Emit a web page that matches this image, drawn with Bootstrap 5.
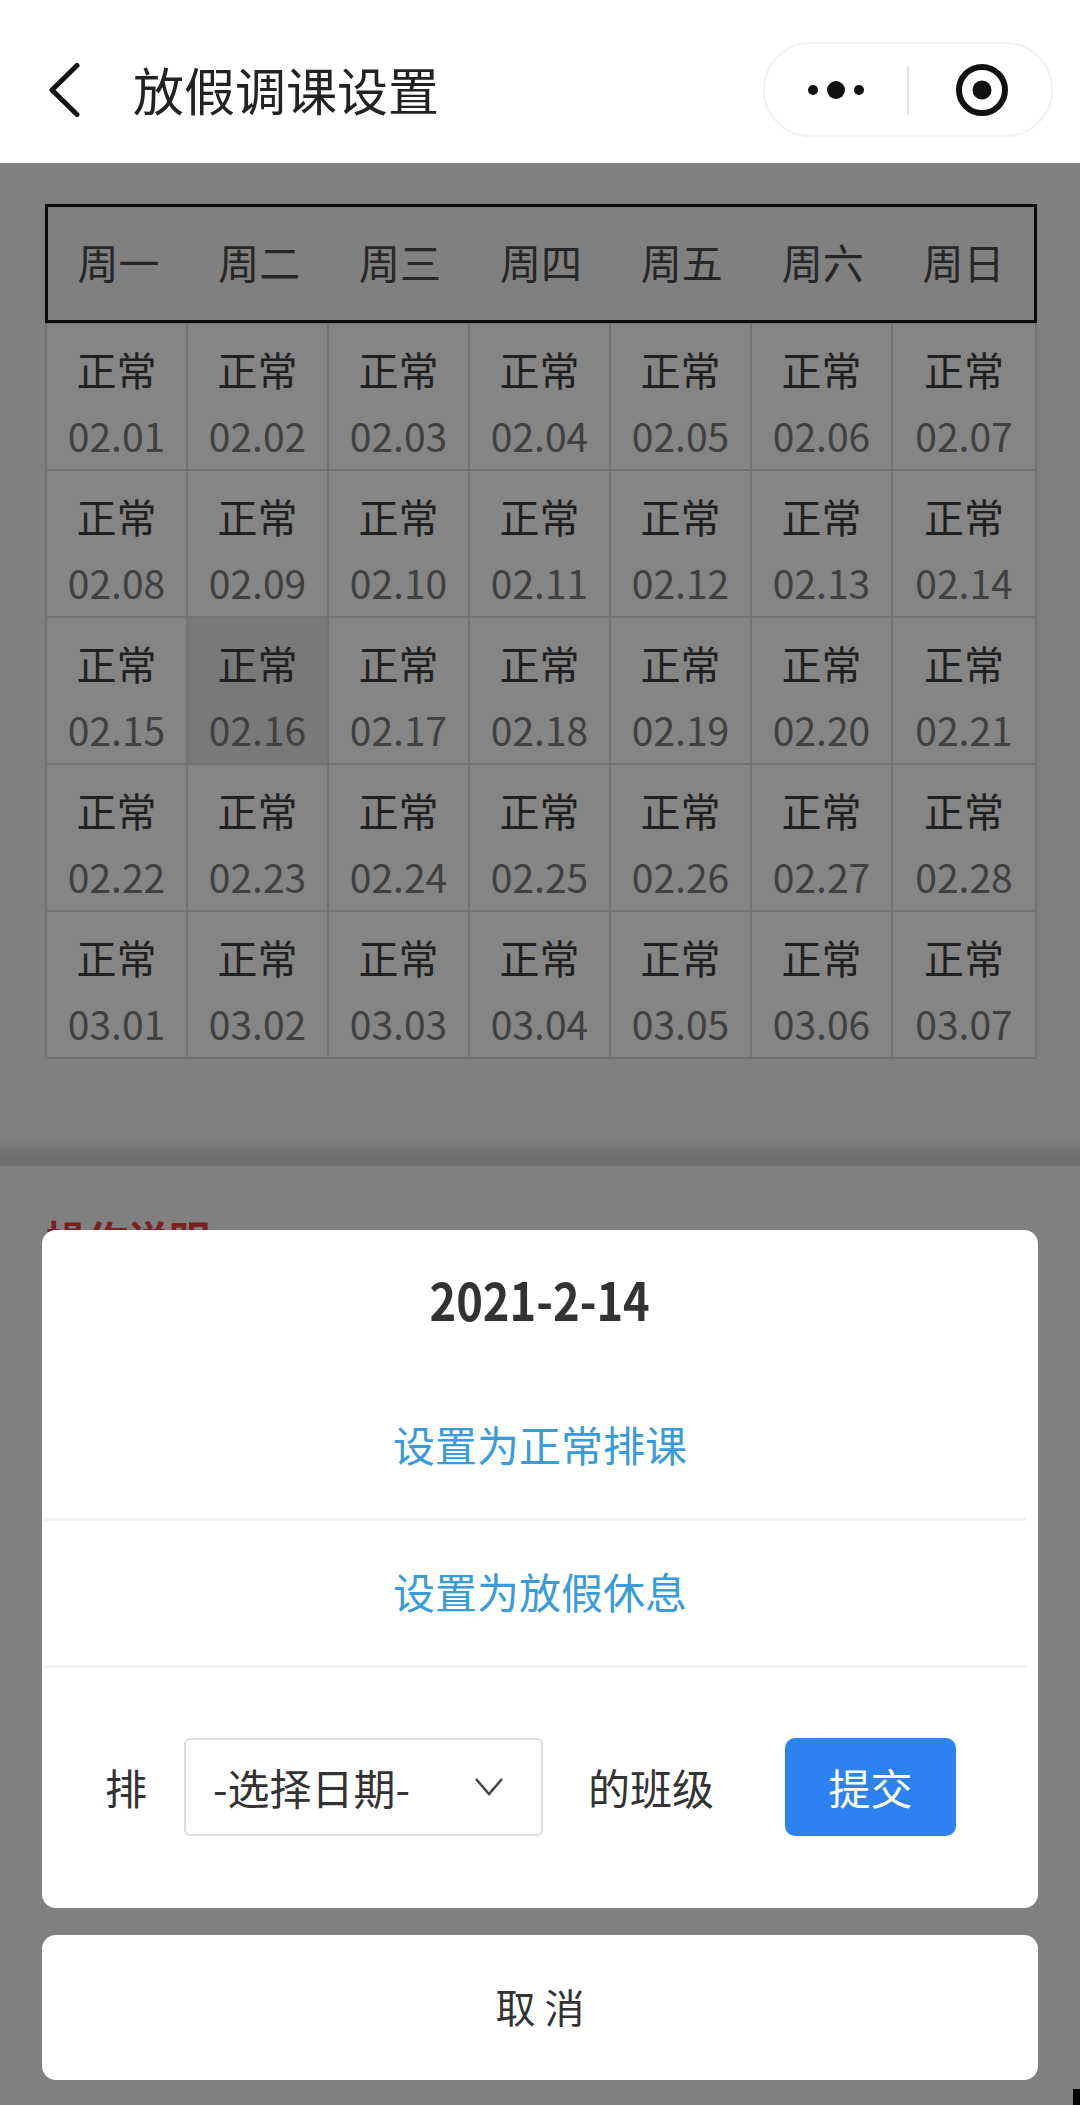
<!DOCTYPE html>
<html lang="zh-CN">
<head>
  <meta charset="UTF-8">
  <title>放假调课设置</title>
  <meta name="viewport" content="width=device-width, initial-scale=1">
  <link href="https://cdn.jsdelivr.net/npm/bootstrap@5.3.3/dist/css/bootstrap.min.css" rel="stylesheet">
  <style>
    html, body {
      height: 2105px;
      overflow: hidden;
    }

    body {
      background: #808080;
      font-family: "Noto Sans CJK SC", "Noto Sans", sans-serif;
      color: #1f1f1f;
    }

    .top-bar {
      height: 163px;
      background: #fff;
      padding: 16px 27px 0 48px;
    }

    .back-icon {
      width: 34px;
      height: 56px;
      margin-right: 51px;
    }

    .page-title {
      font-size: 51px;
      line-height: 1;
      color: #222;
      margin: 0;
    }

    .capsule {
      width: 290px;
      height: 95px;
      border: 2px solid #f1f1f1;
      border-radius: 48px;
    }

    .capsule-half {
      width: 50%;
    }

    .capsule-line {
      width: 2px;
      height: 48px;
      background: #e2e2e2;
    }

    .calendar {
      padding: 41px 43px 0 45px;
    }

    .week-head {
      height: 119px;
      border: 3px solid #0c0c0c;
      padding-bottom: 4px;
      font-size: 41px;
      color: #262626;
    }

    .week-head > div {
      width: 14.2857%;
      text-align: center;
    }

    .day-grid {
      display: grid;
      grid-template-columns: repeat(6, 141px) 1fr;
      border-left: 2px solid #737373;
      border-top: 1px solid #737373;
    }

    .day-cell {
      height: 147px;
      border-right: 2px solid #737373;
      border-bottom: 2px solid #737373;
      background: #858585;
      text-align: center;
      padding-top: 20px;
    }

    .day-cell.picked {
      background: #797979;
    }

    .day-state {
      font-size: 40px;
      line-height: 50px;
      color: #202020;
    }

    .day-date {
      font-size: 39px;
      line-height: 50px;
      margin-top: 16px;
      color: #404040;
    }

    .band {
      height: 26px;
      margin-top: 81px;
      background: linear-gradient(#7f7f7f, #6e6e6e 65%, #707070);
    }

    .notes-title {
      font-size: 41px;
      font-weight: 700;
      line-height: 1;
      color: #7a2020;
      padding: 52px 0 0 46px;
    }

    .sheet {
      position: absolute;
      left: 42px;
      right: 42px;
      top: 1230px;
    }

    .sheet-card {
      background: #fff;
      border-radius: 14px;
      overflow: hidden;
    }

    .sheet-title {
      height: 144px;
      padding-bottom: 6px;
      font-size: 52px;
      font-weight: 700;
      color: #333;
    }

    .sheet-title span {
      display: inline-block;
      transform: scaleX(.87);
    }

    .sheet-option {
      height: 144px;
      padding-bottom: 6px;
      font-size: 42px;
      color: #3a9bdc;
    }

    .sheet-rule {
      height: 3px;
      margin: 0 12px 0 2px;
      background: #f3f3f3;
    }

    .swap-row {
      height: 240px;
      padding: 0 0 3px 63px;
      font-size: 42px;
      color: #333;
    }

    .date-picker {
      width: 359px;
      height: 98px;
      border: 2px solid #ddd;
      border-radius: 6px;
      margin: 0 45px 0 37px;
      padding: 0 37px 0 27px;
    }

    .date-picker svg {
      width: 30px;
      height: 22px;
    }

    .submit-btn {
      width: 171px;
      height: 98px;
      margin-left: 71px;
      border: 0;
      border-radius: 10px;
      background: #2b82f0;
      color: #fff;
      font-size: 42px;
    }

    .cancel-btn {
      height: 145px;
      margin-top: 27px;
      padding-bottom: 4px;
      font-size: 40px;
      color: #333;
    }

    .corner-mark {
      position: absolute;
      right: 0;
      bottom: 0;
      width: 7px;
      height: 16px;
      background: #000;
    }
  </style>
</head>
<body>
  <header class="top-bar d-flex align-items-center">
    <svg class="back-icon" viewBox="0 0 34 56" fill="none" stroke="#111" stroke-width="5" stroke-linecap="round" stroke-linejoin="round">
      <path d="M29 3.5 L4 28 L29 52.5"/>
    </svg>
    <h1 class="page-title fw-normal">放假调课设置</h1>
    <div class="capsule d-flex align-items-center ms-auto">
      <div class="capsule-half d-flex justify-content-center">
        <svg width="60" height="20" viewBox="0 0 60 20" fill="#111">
          <circle cx="7" cy="10" r="5"/>
          <circle cx="30" cy="10" r="9"/>
          <circle cx="53" cy="10" r="5"/>
        </svg>
      </div>
      <div class="capsule-line"></div>
      <div class="capsule-half d-flex justify-content-center ps-1">
        <svg width="54" height="54" viewBox="0 0 54 54">
          <circle cx="27" cy="27" r="23" fill="none" stroke="#111" stroke-width="6"/>
          <circle cx="27" cy="27" r="9.5" fill="#111"/>
        </svg>
      </div>
    </div>
  </header>

  <main class="calendar">
    <div class="week-head d-flex align-items-center">
      <div>周一</div><div>周二</div><div>周三</div><div>周四</div><div>周五</div><div>周六</div><div>周日</div>
    </div>
    <div class="day-grid" id="dayGrid"></div>
  </main>

  <div class="band"></div>
  <div class="notes-title">操作说明</div>

  <div class="sheet">
    <div class="sheet-card">
      <div class="sheet-title d-flex align-items-center justify-content-center"><span>2021-2-14</span></div>
      <div class="sheet-option d-flex align-items-center justify-content-center">设置为正常排课</div>
      <div class="sheet-rule"></div>
      <div class="sheet-option d-flex align-items-center justify-content-center">设置为放假休息</div>
      <div class="sheet-rule"></div>
      <div class="swap-row d-flex align-items-center">
        <span>排</span>
        <div class="date-picker d-flex align-items-center justify-content-between">
          <span>-选择日期-</span>
          <svg viewBox="0 0 30 22" fill="none" stroke="#444" stroke-width="2.5"><path d="M2 3 L15 18 L28 3"/></svg>
        </div>
        <span>的班级</span>
        <button type="button" class="btn submit-btn">提交</button>
      </div>
    </div>
    <div class="sheet-card cancel-btn d-flex align-items-center justify-content-center">取 消</div>
  </div>

  <div class="corner-mark"></div>

  <script src="https://cdn.jsdelivr.net/npm/bootstrap@5.3.3/dist/js/bootstrap.bundle.min.js"></script>
  <script>
    // five weeks starting at 02.01, all marked normal
    var dates = [];
    for (var i = 1; i <= 28; i++) dates.push('02.' + String(i).padStart(2, '0'));
    for (var j = 1; j <= 7; j++) dates.push('03.' + String(j).padStart(2, '0'));

    var html = '';
    dates.forEach(function (d) {
      html += '<div class="day-cell' + (d === '02.16' ? ' picked' : '') + '">' +
        '<div class="day-state">正常</div><div class="day-date">' + d + '</div></div>';
    });
    document.getElementById('dayGrid').innerHTML = html;
  </script>
</body>
</html>
